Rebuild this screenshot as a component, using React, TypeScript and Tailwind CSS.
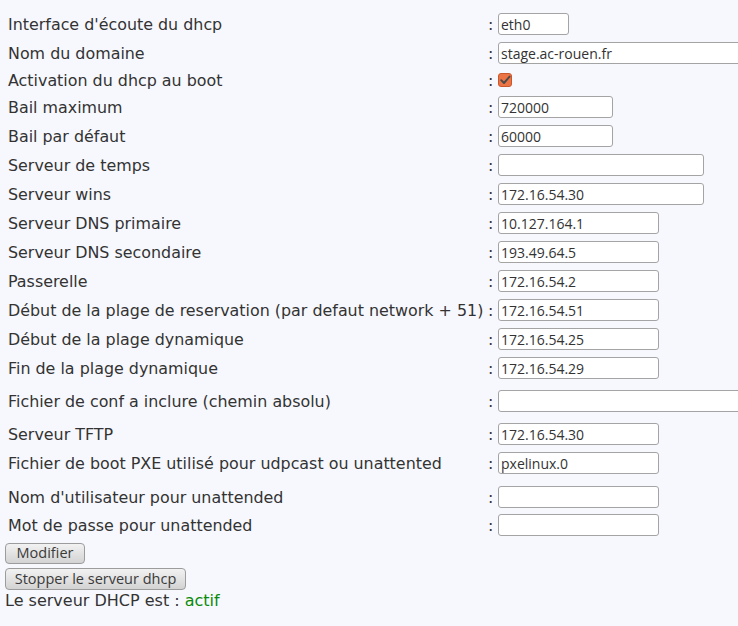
import React from 'react'

interface Row {
  label: string
  value?: string
  width?: string
  gap: string
  checkbox?: boolean
}

const rows: Row[] = [
  { label: "Interface d'écoute du dhcp", value: 'eth0', width: 'w-[71px]', gap: 'mt-[13px]' },
  { label: 'Nom du domaine', value: 'stage.ac-rouen.fr', width: 'w-[260px]', gap: 'mt-[7px]' },
  { label: 'Activation du dhcp au boot', checkbox: true, gap: 'mt-[5px]' },
  { label: 'Bail maximum', value: '720000', width: 'w-[115px]', gap: 'mt-[5px]' },
  { label: 'Bail par défaut', value: '60000', width: 'w-[115px]', gap: 'mt-[7px]' },
  { label: 'Serveur de temps', value: '', width: 'w-[206px]', gap: 'mt-[7px]' },
  { label: 'Serveur wins', value: '172.16.54.30', width: 'w-[206px]', gap: 'mt-[7px]' },
  { label: 'Serveur DNS primaire', value: '10.127.164.1', width: 'w-[161px]', gap: 'mt-[7px]' },
  { label: 'Serveur DNS secondaire', value: '193.49.64.5', width: 'w-[161px]', gap: 'mt-[7px]' },
  { label: 'Passerelle', value: '172.16.54.2', width: 'w-[161px]', gap: 'mt-[7px]' },
  { label: 'Début de la plage de reservation (par defaut network + 51)', value: '172.16.54.51', width: 'w-[161px]', gap: 'mt-[7px]' },
  { label: 'Début de la plage dynamique', value: '172.16.54.25', width: 'w-[161px]', gap: 'mt-[7px]' },
  { label: 'Fin de la plage dynamique', value: '172.16.54.29', width: 'w-[161px]', gap: 'mt-[7px]' },
  { label: 'Fichier de conf a inclure (chemin absolu)', value: '', width: 'w-[260px]', gap: 'mt-[11px]' },
  { label: 'Serveur TFTP', value: '172.16.54.30', width: 'w-[161px]', gap: 'mt-[11px]' },
  { label: 'Fichier de boot PXE utilisé pour udpcast ou unattented', value: 'pxelinux.0', width: 'w-[161px]', gap: 'mt-[7px]' },
  { label: "Nom d'utilisateur pour unattended", value: '', width: 'w-[161px]', gap: 'mt-[12px]' },
  { label: 'Mot de passe pour unattended', value: '', width: 'w-[161px]', gap: 'mt-[6px]' },
]

function OrangeCheck() {
  return (
    <svg width="14" height="14" viewBox="0 0 14 14" className="block">
      <rect x="0.5" y="0.5" width="13" height="13" rx="2.5" fill="#ec7344" stroke="#c9572a" />
      <path d="M3.2 7.2 L6 10 L11.6 3.6" fill="none" stroke="#4a4a4a" strokeWidth="1.9" strokeLinecap="round" strokeLinejoin="round" />
    </svg>
  )
}

export default function App() {
  return (
    <div className="min-h-screen bg-[#f7f8fd] overflow-hidden text-[#333] font-['DejaVu_Sans',sans-serif]">
      {/* Form rows */}
      <div className="pl-[8px]">
        {rows.map(r => (
          <div key={r.label} className={`grid grid-cols-[478px_12px_1fr] items-center h-[22px] ${r.gap}`}>
            <span className="text-[15.9px] leading-none whitespace-nowrap pt-[2px]">{r.label}</span>
            <span className="text-[15.9px] leading-none pl-[2px] pt-[2px]">:</span>
            <div className="flex items-center">
              {r.checkbox ? (
                <OrangeCheck />
              ) : (
                <input
                  type="text"
                  defaultValue={r.value}
                  className={`${r.width} shrink-0 h-[22px] bg-white border border-[#a4a4a4] rounded-[3px] px-[2px] text-[14px] text-[#333] font-['Open_Sans',sans-serif] outline-none`}
                />
              )}
            </div>
          </div>
        ))}
      </div>

      {/* Buttons */}
      <div className="pl-[5px] mt-[7px] flex flex-col items-start gap-[4px]">
        <button className="w-[80px] h-[21px] rounded-[4px] border border-[#9c9c9c] bg-gradient-to-b from-[#f2f2f2] to-[#d3d3d3] text-[14.5px] leading-none text-[#3a3a3a] font-['Open_Sans',sans-serif]">
          Modifier
        </button>
        <button className="w-[181px] h-[22px] rounded-[4px] border border-[#9c9c9c] bg-gradient-to-b from-[#f2f2f2] to-[#d3d3d3] text-[14.5px] leading-none text-[#3a3a3a] font-['Open_Sans',sans-serif]">
          Stopper le serveur dhcp
        </button>
      </div>

      <p className="pl-[5px] mt-[1px] text-[16px] leading-[20px]">
        Le serveur DHCP est : <span className="text-[#0a8a0a]">actif</span>
      </p>
    </div>
  )
}
